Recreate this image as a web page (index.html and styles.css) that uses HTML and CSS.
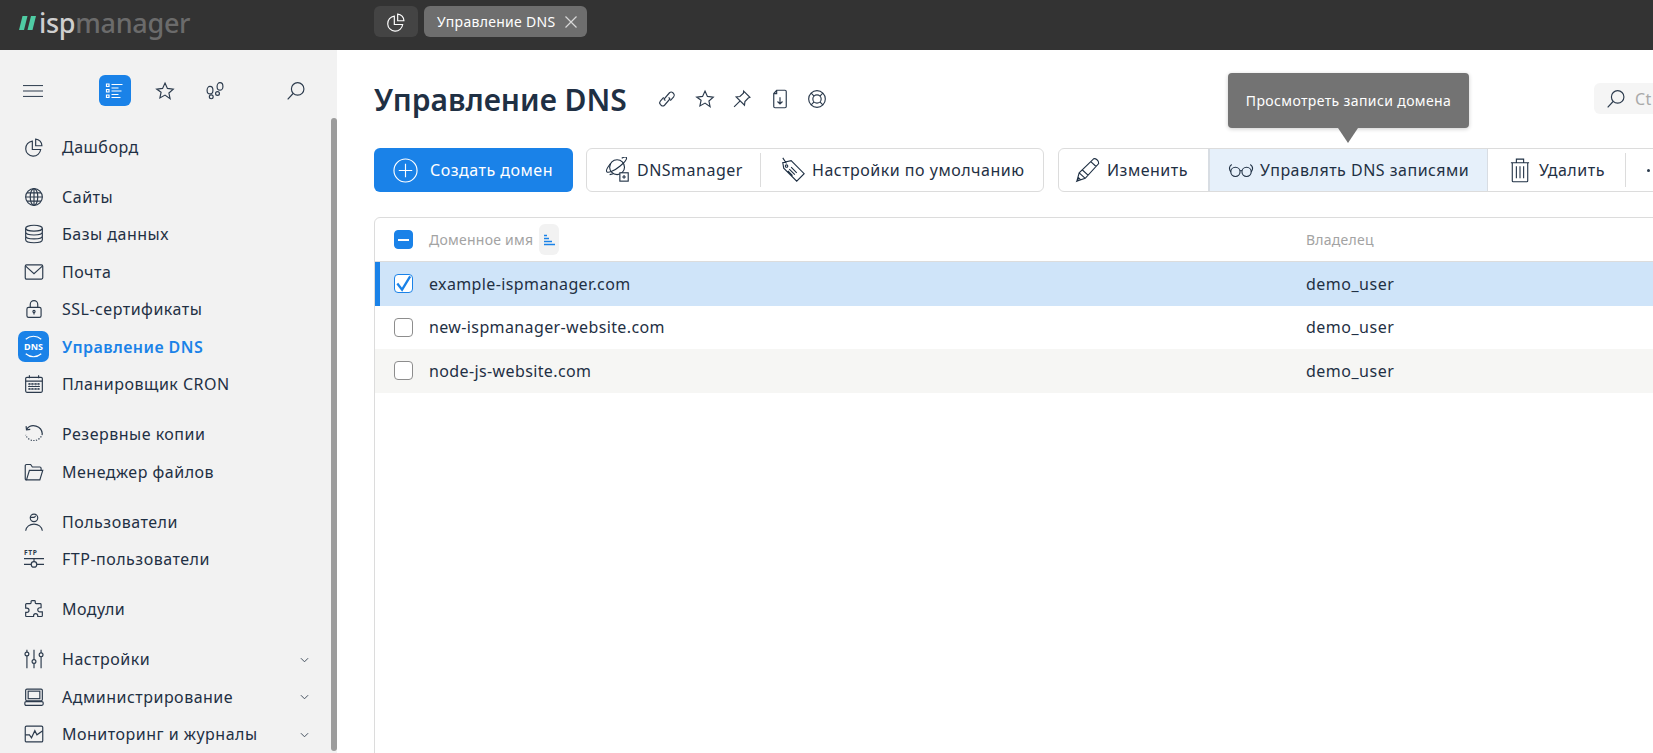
FILE: index.html
```html
<!DOCTYPE html>
<html lang="ru">
<head>
    <meta charset="UTF-8">
    <title>Управление DNS</title>
    <link rel="stylesheet" href="styles.css">
</head>
<body>
    <header class="topbar">
        <div class="logo">
            <svg class="logo-mark" viewBox="0 0 17 14"><path d="M3.500 0H8.500L5 14H0zM12 0H17L13.500 14H8.500z"/></svg>
            <span class="logo-isp">isp</span><span class="logo-manager">manager</span>
        </div>
        <div class="home-tab">
            <svg class="ico" viewBox="0 0 24 24"><path d="M10 5a9 9 0 1 0 10 10H10z"/><path d="M14 2.500a8 8 0 0 1 7.500 8H14z"/></svg>
        </div>
        <div class="tab">Управление DNS
            <svg class="tab-close" viewBox="0 0 14 14"><path d="M1.500 1.500l11 11M12.500 1.500l-11 11"/></svg>
        </div>
    </header>

    <div class="layout">
        <aside class="sidebar">
            <div class="side-tools">
                <svg class="ico burger" viewBox="0 0 24 24"><path d="M0 5.500h24M0 12h24M0 18.500h24"/></svg>
                <span class="tool-active">
                    <svg viewBox="0 0 20 20"><path d="M1.500 3h2.500v2.500H1.500zM1.500 8.500h2.500v2.500H1.500zM1.500 14h2.500v2.500H1.500zM6.500 3.500h11M6.500 7h7M6.500 10h10M6.500 13.500h7M6.500 16.500h9"/></svg>
                </span>
                <svg class="ico tool-star" viewBox="0 0 24 24"><path d="M12 2.500l2.900 6.400 7 .8-5.200 4.700 1.400 6.900L12 16.900l-6.100 3.400 1.400-6.900L2.100 9.700l7-.8z"/></svg>
                <svg class="ico tool-steps" viewBox="0 0 24 24"><ellipse cx="6" cy="11" rx="3.500" ry="4.500"/><circle cx="7.500" cy="19" r="2.300"/><ellipse cx="18" cy="6.500" rx="3.500" ry="4.500"/><circle cx="15" cy="15" r="2.300"/></svg>
                <svg class="ico tool-search" viewBox="0 0 24 24"><circle cx="14" cy="9.500" r="7.500"/><path d="M8.500 15L2 22"/></svg>
            </div>
            <div class="scroll-thumb"></div>

            <nav class="nav">
                <div class="nav-group">
                    <a class="nav-item"><svg class="ico" viewBox="0 0 24 24"><path d="M10 5a9 9 0 1 0 10 10H10z"/><path d="M14 2.500a8 8 0 0 1 7.500 8H14z"/></svg>Дашборд</a>
                </div>
                <div class="nav-group">
                    <a class="nav-item"><svg class="ico" viewBox="0 0 24 24"><circle cx="12" cy="12" r="10"/><ellipse cx="12" cy="12" rx="4.500" ry="10"/><path d="M12 2v20M2 12h20M3.500 7h17M3.500 17h17"/></svg>Сайты</a>
                    <a class="nav-item"><svg class="ico" viewBox="0 0 24 24"><ellipse cx="12" cy="5" rx="10" ry="3.500"/><path d="M2 5v14c0 2 4.500 3.500 10 3.500s10-1.500 10-3.500V5M2 9.700c0 2 4.500 3.500 10 3.500s10-1.500 10-3.500M2 14.400c0 2 4.500 3.500 10 3.500s10-1.500 10-3.500"/></svg>Базы данных</a>
                    <a class="nav-item"><svg class="ico" viewBox="0 0 24 24"><rect x="1.500" y="3.500" width="21" height="17" rx="1.500"/><path d="M2 5l10 9 10-9"/></svg>Почта</a>
                    <a class="nav-item"><svg class="ico" viewBox="0 0 24 24"><rect x="3.500" y="10" width="17" height="12" rx="2"/><path d="M7.500 10V6.500a4.500 4.500 0 0 1 9 0V10"/><circle cx="12" cy="15" r="1.300"/><path d="M12 16v2.500"/></svg>SSL-сертификаты</a>
                    <a class="nav-item nav-item-active">
                        <span class="dns-badge">
                            <svg viewBox="0 0 32 32"><path d="M8 8.500a12 12 0 0 1 16 0M8 23.500a12 12 0 0 0 16 0"/></svg>
                            <span class="dns-label">DNS</span>
                        </span>Управление DNS</a>
                    <a class="nav-item"><svg class="ico" viewBox="0 0 24 24"><rect x="2" y="4" width="20" height="18" rx="1.500"/><path d="M2 8.500h20M6.500 1.500V5M17.500 1.500V5M5 12h14M5 15h14M5 18h14" /><path d="M6.500 11v8M10 11v8M14 11v8M17.500 11v8" stroke-dasharray="1.500 1.500"/></svg>Планировщик CRON</a>
                </div>
                <div class="nav-group">
                    <a class="nav-item"><svg class="ico" viewBox="0 0 24 24"><path d="M3 6.500A10.500 10.500 0 0 1 22 12"/><path d="M22 12A10.500 10.500 0 0 1 2 13" stroke-dasharray="1.500 1.700"/><path d="M2.500 2.500L3 7l4.500-.5"/></svg>Резервные копии</a>
                    <a class="nav-item"><svg class="ico" viewBox="0 0 24 24"><path d="M3 21.500a1.500 1.500 0 0 1-1.500-1.500V4.500A1.500 1.500 0 0 1 3 3h5l2 3h9a1.500 1.500 0 0 1 1.500 1.500V10"/><path d="M3 21.500l3.500-11.500h16l-3.500 11.500z"/></svg>Менеджер файлов</a>
                </div>
                <div class="nav-group">
                    <a class="nav-item"><svg class="ico" viewBox="0 0 24 24"><circle cx="12" cy="7" r="4.500"/><path d="M7.500 6.500h5M12.500 6.500l1.500-2M2 22.500c.5-5 5-8 10-8s9.500 3 10 8"/></svg>Пользователи</a>
                    <a class="nav-item"><svg class="ico" viewBox="0 0 24 24"><text class="ftp-text" x="0" y="7.500">FTP</text><path d="M0 11.500h24M0 18.500h8.500M15.500 18.500H24"/><circle cx="12" cy="18.500" r="3.300"/><path d="M12 11.500v3.700"/></svg>FTP-пользователи</a>
                </div>
                <div class="nav-group">
                    <a class="nav-item"><svg class="ico" viewBox="0 0 24 24"><path d="M8.500 4.500V3a1 1 0 0 1 1-1h3a1 1 0 0 1 1 1v1.500a1 1 0 0 0 1 1h5a1 1 0 0 1 1 1v4h-1.500a2 2 0 0 0 0 5H22v4.500a1 1 0 0 1-1 1h-4.500v-1a2.500 2.500 0 0 0-5 0v1H3a1 1 0 0 1-1-1v-4h1.500a2.500 2.500 0 0 0 0-5H2v-4.500a1 1 0 0 1 1-1h4.500a1 1 0 0 0 1-1z"/></svg>Модули</a>
                </div>
                <div class="nav-group">
                    <a class="nav-item"><svg class="ico" viewBox="0 0 24 24"><circle cx="3.500" cy="6" r="2.300"/><circle cx="12" cy="15" r="2.300"/><circle cx="20.500" cy="7" r="2.300"/><path d="M3.500 1v2.700M3.500 8.300V23M12 1v11.700M12 17.300V23M20.500 1v3.700M20.500 9.300V23"/></svg>Настройки<svg class="chevron" viewBox="0 0 10 6"><path d="M1 1l4 4 4-4"/></svg></a>
                    <a class="nav-item"><svg class="ico" viewBox="0 0 24 24"><rect x="2" y="2.500" width="20" height="14" rx="1.500"/><rect x="5" y="5" width="14" height="9"/><rect x="1" y="17.500" width="22" height="4.500" rx="1.500"/></svg>Администрирование<svg class="chevron" viewBox="0 0 10 6"><path d="M1 1l4 4 4-4"/></svg></a>
                    <a class="nav-item"><svg class="ico" viewBox="0 0 24 24"><rect x="1.500" y="2.500" width="21" height="19" rx="1.500"/><path d="M1.500 13h5l2.500 3.500 4-8.500 2.500 5 7-5"/></svg>Мониторинг и журналы<svg class="chevron" viewBox="0 0 10 6"><path d="M1 1l4 4 4-4"/></svg></a>
                </div>
            </nav>
        </aside>

        <main class="main">
            <div class="title-row">
                <h1>Управление DNS</h1>
                <div class="title-icons">
                    <svg class="ico" viewBox="0 0 24 24"><path d="M10 14l-1.500-2L15 4.500a3 3 0 0 1 4 0l1 1a3 3 0 0 1 0 4L16 14M14 10l1.500 2L9 19.500a3 3 0 0 1-4 0l-1-1a3 3 0 0 1 0-4L8 10"/></svg>
                    <svg class="ico" viewBox="0 0 24 24"><path d="M12 2.500l2.900 6.400 7 .8-5.200 4.700 1.400 6.900L12 16.900l-6.100 3.400 1.400-6.900L2.100 9.700l7-.8z"/></svg>
                    <svg class="ico" viewBox="0 0 24 24"><path d="M14 2.500l7.500 7.500-2 .8-4 4.200-.5 4.500L5 9.500l4.500-.5 4.200-4zM9.500 14.500L2.500 21.500"/></svg>
                    <svg class="ico" viewBox="0 0 24 24"><path d="M8 1.500h10a1.500 1.500 0 0 1 1.500 1.500v18a1.500 1.500 0 0 1-1.500 1.500H6A1.500 1.500 0 0 1 4.500 21V5.500zM8 1.500v4H4.500M12 10v7.500M9 15l3 3 3-3"/></svg>
                    <svg class="ico" viewBox="0 0 24 24"><circle cx="12" cy="12" r="10"/><circle cx="12" cy="12" r="5"/><path d="M5 5l3.500 3.500M19 5l-3.500 3.500M5 19l3.500-3.500M19 19l-3.500-3.500"/></svg>
                </div>
                <div class="title-search">
                    <svg class="ico" viewBox="0 0 24 24"><circle cx="14" cy="9.500" r="7.500"/><path d="M8.500 15L2 22"/></svg>
                    <span>Ct</span>
                </div>
            </div>

            <div class="toolbar">
                <button class="btn-create">
                    <svg viewBox="0 0 26 26"><circle cx="13" cy="13" r="12"/><path d="M13 6v14M6 13h14"/></svg>
                    Создать домен
                </button>
                <div class="btn-group group-a">
                    <button class="btn btn-dns">
                        <svg class="ico-lg" viewBox="0 0 28 28"><circle cx="13" cy="11" r="8"/><path d="M6 7C2 12 1 15 2 16c1.500 1.500 8-1 14-6s8-8 7-9.500c-.6-.8-2.500-.5-5 .8M9 18l-4 1"/><rect x="16" y="17" width="9" height="9" fill="#fff"/><path d="M20.500 19.500v4M18.500 21.500h4"/></svg>
                        DNSmanager
                    </button>
                    <button class="btn btn-defaults">
                        <svg class="ico-lg" viewBox="0 0 28 28"><path d="M3 6l9-2 14 14-8 8L4 12zM7 8.500a1.300 1.300 0 1 0 .1 0M7 7L3 1M10 13l6 6M12 11l6 6M8.500 15l5 5" /></svg>
                        Настройки по умолчанию
                    </button>
                </div>
                <div class="btn-group group-b">
                    <button class="btn btn-edit">
                        <svg class="ico-lg" viewBox="0 0 28 28"><path d="M2 26l2.500-9L20 2c2-1 6 2 5.500 5L11 23zM4.500 17l6.500 6M8 14l6 5.500M17 5l6 5.500M2 26l4-1.500-2-2z"/></svg>
                        Изменить
                    </button>
                    <button class="btn btn-records">
                        <svg class="ico-lg" viewBox="0 0 28 28"><circle cx="8" cy="16" r="5"/><circle cx="20" cy="16" r="5"/><path d="M13 15c.8-.7 1.400-.7 2 0M3 16C1 13 1 10 4 8M25 16c2-3 2-6-1-8"/></svg>
                        Управлять DNS записями
                    </button>
                    <button class="btn btn-delete">
                        <svg class="ico-trash" viewBox="0 0 22 28"><path d="M1 6h20M7 6V2h8v4M2.500 6v20a1 1 0 0 0 1 1h15a1 1 0 0 0 1-1V6M7 10v13M11 10v13M15 10v13"/></svg>
                        Удалить
                    </button>
                    <div class="btn-more"><i></i><i></i><i></i></div>
                </div>
            </div>

            <div class="tooltip">Просмотреть записи домена</div>

            <div class="list">
                <div class="row row-head">
                    <span class="check check-minus"></span>
                    <span class="col-name head-name">Доменное имя
                        <span class="sort-btn"><svg viewBox="0 0 12 12"><path d="M1 1.500h3M1 4.500h5M1 7.500h8M1 10.500h11"/></svg></span>
                    </span>
                    <span class="col-owner">Владелец</span>
                </div>
                <div class="row row-selected">
                    <span class="check check-on"><svg viewBox="0 0 20 20"><path d="M3.500 10l5 6.500L17 2.500"/></svg></span>
                    <span class="col-name">example-ispmanager.com</span>
                    <span class="col-owner">demo_user</span>
                </div>
                <div class="row">
                    <span class="check"></span>
                    <span class="col-name">new-ispmanager-website.com</span>
                    <span class="col-owner">demo_user</span>
                </div>
                <div class="row row-alt">
                    <span class="check"></span>
                    <span class="col-name">node-js-website.com</span>
                    <span class="col-owner">demo_user</span>
                </div>
            </div>
        </main>
    </div>
</body>
</html>
```

FILE: styles.css
```css
* {
    box-sizing: border-box;
}
html, body {
    height: 100%;
}
body {
    margin: 0;
    overflow: hidden;
    font-family: "Noto Sans", sans-serif;
    font-size: 16px;
    letter-spacing: 0.500px;
    color: #1f3044;
    background: #fff;
}
.ico {
    width: 20px;
    height: 20px;
    fill: none;
    stroke: #2c3b4d;
    stroke-width: 1.400;
    flex: none;
}

/* top bar */
.topbar {
    height: 50px;
    background: #333;
    display: flex;
    align-items: flex-start;
    padding: 6px 0 0 19px;
}
.logo {
    width: 355px;
    height: 32px;
    display: flex;
    align-items: center;
    font-size: 27px;
    font-weight: 500;
    letter-spacing: -0.300px;
    line-height: 32px;
    padding-top: 2px;
}
.logo-mark {
    width: 17px;
    height: 14px;
    fill: #4fcca3;
    margin-right: 3px;
}
.logo-isp {
    color: #cfcfcf;
}
.logo-manager {
    color: #6b6b6b;
}
.home-tab {
    width: 44px;
    height: 31px;
    background: #444;
    border-radius: 6px;
    display: flex;
    align-items: center;
    justify-content: center;
    margin-right: 6px;
}
.home-tab .ico {
    stroke: #fff;
}
.tab {
    width: 163px;
    height: 31px;
    background: #6e6e6e;
    border-radius: 6px;
    color: #fff;
    font-size: 14px;
    letter-spacing: 0.300px;
    display: flex;
    align-items: center;
    justify-content: space-between;
    padding: 0 9px 0 13px;
}
.tab-close {
    width: 14px;
    height: 14px;
    fill: none;
    stroke: #d8d8d8;
    stroke-width: 1.200;
}

.layout {
    display: flex;
    height: calc(100% - 50px);
}

/* sidebar */
.sidebar {
    width: 337px;
    flex: none;
    background: #f2f2f2;
    position: relative;
    overflow: hidden;
}
.side-tools {
    display: flex;
    align-items: center;
    height: 31px;
    margin-top: 25px;
    padding-left: 23px;
}
.burger {
    stroke-width: 1.200;
}
.tool-active {
    width: 32px;
    height: 31px;
    background: #1a82e8;
    border-radius: 6px;
    margin-left: 56px;
    display: flex;
    align-items: center;
    justify-content: center;
}
.tool-active svg {
    width: 20px;
    height: 20px;
    fill: none;
    stroke: #fff;
    stroke-width: 1.200;
}
.tool-star {
    margin-left: 24px;
}
.tool-steps {
    margin-left: 30px;
}
.tool-search {
    margin-left: 61px;
}
.scroll-thumb {
    position: absolute;
    right: 0;
    top: 68px;
    bottom: 2px;
    width: 6px;
    border-radius: 3px;
    background: #9c9c9c;
}
.nav {
    padding: 22px 0 0 24px;
}
.nav-group {
    margin-bottom: 12.500px;
}
.nav-item {
    height: 37.500px;
    display: flex;
    align-items: center;
    gap: 18px;
    position: relative;
    white-space: nowrap;
}
.nav-item-active {
    color: #1a82e8;
    font-weight: 600;
    letter-spacing: 0.450px;
}
.dns-badge {
    width: 31px;
    height: 31px;
    margin: 0 -5px 0 -6px;
    background: #1a82e8;
    border-radius: 7px;
    position: relative;
    display: flex;
    align-items: center;
    justify-content: center;
    flex: none;
}
.dns-badge svg {
    position: absolute;
    inset: 0;
    fill: none;
    stroke: #fff;
    stroke-width: 1.200;
}
.dns-label {
    color: #fff;
    font-size: 9px;
    font-weight: 700;
    letter-spacing: 0;
}
.ftp-text {
    font-size: 8px;
    font-weight: 700;
    letter-spacing: 0.800px;
    fill: #2c3b4d;
    stroke: none;
}
.chevron {
    position: absolute;
    left: 276px;
    top: 16px;
    width: 9px;
    height: 6px;
    fill: none;
    stroke: #44505e;
    stroke-width: 1.100;
}

/* main */
.main {
    flex: 1;
    min-width: 0;
    padding: 0 0 0 37px;
    position: relative;
    overflow: hidden;
}
.title-row {
    height: 98px;
    display: flex;
    align-items: center;
}
h1 {
    margin: 0;
    font-size: 30px;
    font-weight: 600;
    letter-spacing: 0;
    width: 283px;
    white-space: nowrap;
}
.title-icons {
    display: flex;
    gap: 17.500px;
}
.title-search {
    position: absolute;
    left: 1257px;
    top: 33px;
    width: 80px;
    height: 31px;
    border-radius: 6px;
    background: #f5f5f5;
    display: flex;
    align-items: center;
    gap: 9px;
    padding-left: 12px;
    color: #a9a9a9;
}
.toolbar {
    display: flex;
    height: 44px;
    width: 1400px;
}
.btn-create {
    width: 199px;
    height: 44px;
    background: #1a82e8;
    color: #fff;
    border: 0;
    border-radius: 6px;
    font: inherit;
    letter-spacing: inherit;
    display: flex;
    align-items: center;
    gap: 12px;
    padding: 0 0 0 19px;
    margin-right: 13px;
}
.btn-create svg {
    width: 25px;
    height: 25px;
    fill: none;
    stroke: #fff;
    stroke-width: 1.200;
}
.btn-group {
    display: flex;
    height: 44px;
    border: 1px solid #dcdcdc;
    border-radius: 6px;
    flex: none;
}
.group-a {
    width: 458px;
    margin-right: 14px;
}
.group-b {
    width: 640px;
}
.btn {
    height: 42px;
    border: 0;
    background: none;
    font: inherit;
    letter-spacing: inherit;
    color: inherit;
    display: flex;
    align-items: center;
    gap: 6px;
    padding: 0;
    position: relative;
    white-space: nowrap;
}
.ico-lg {
    width: 26px;
    height: 26px;
    fill: none;
    stroke: #1f3044;
    stroke-width: 1.200;
    flex: none;
}
.ico-trash {
    width: 20px;
    height: 26px;
    fill: none;
    stroke: #1f3044;
    stroke-width: 1.200;
    flex: none;
}
.btn-dns {
    width: 174px;
    padding-left: 18px;
}
.btn-dns::after, .btn-delete::after {
    content: "";
    position: absolute;
    right: 0;
    top: 4px;
    bottom: 4px;
    width: 1px;
    background: #dcdcdc;
}
.btn-defaults {
    padding-left: 19px;
}
.btn-edit {
    width: 151px;
    padding-left: 16px;
    border-right: 2px solid #d8dde3;
}
.btn-records {
    width: 278px;
    padding-left: 18px;
    background: #e6f0fa;
    border-right: 1px solid #d8dde3;
}
.btn-delete {
    width: 138px;
    padding-left: 22px;
    gap: 9px;
}
.btn-more {
    display: flex;
    align-items: center;
    gap: 5px;
    padding-left: 21px;
}
.btn-more i {
    width: 3px;
    height: 3px;
    border-radius: 50%;
    background: #2c3b4d;
}

/* tooltip over the records button */
.tooltip {
    position: absolute;
    left: 891px;
    top: 23px;
    width: 241px;
    height: 55px;
    background: #737373;
    border-radius: 4px;
    color: #fff;
    font-size: 14px;
    letter-spacing: 0.380px;
    display: flex;
    align-items: center;
    justify-content: center;
    box-shadow: 0 1px 4px rgba(0, 0, 0, 0.200);
}
.tooltip::after {
    content: "";
    position: absolute;
    left: 110px;
    top: 55px;
    border-style: solid;
    border-width: 15px 10px 0;
    border-color: #737373 transparent transparent;
}

/* domain list */
.list {
    width: 1400px;
    margin-top: 25px;
    height: 600px;
    border: 1px solid #dcdcdc;
    border-radius: 6px 0 0 0;
}
.row {
    height: 43.500px;
    display: flex;
    align-items: center;
    padding-left: 19px;
    white-space: nowrap;
}
.row-head {
    height: 44px;
    border-bottom: 1px solid #dcdcdc;
    color: #a3a3a3;
    font-size: 14px;
    letter-spacing: 0.250px;
}
.row-selected {
    background: #cfe4f9;
    border-left: 5px solid #1a82e8;
    padding-left: 14px;
}
.row-alt {
    background: #f6f6f4;
}
.check {
    width: 19px;
    height: 19px;
    border: 1px solid #8d8d8d;
    border-radius: 4px;
    background: #fff;
    flex: none;
    display: flex;
    align-items: center;
    justify-content: center;
}
.check-minus {
    background: #1a82e8;
    border-color: #1a82e8;
}
.check-minus::before {
    content: "";
    width: 11px;
    height: 2px;
    background: #fff;
}
.check-on {
    border-color: #1a82e8;
}
.check-on svg {
    width: 19px;
    height: 19px;
    flex: none;
    fill: none;
    stroke: #1a82e8;
    stroke-width: 2.400;
}
.col-name {
    width: 877px;
    margin-left: 16px;
    letter-spacing: 0.380px;
    flex: none;
}
.head-name {
    display: flex;
    align-items: center;
    gap: 6px;
    letter-spacing: inherit;
}
.sort-btn {
    width: 20px;
    height: 31px;
    background: #f2f2f2;
    border-radius: 6px;
    display: flex;
    align-items: center;
    justify-content: center;
}
.sort-btn svg {
    width: 12px;
    height: 12px;
    fill: none;
    stroke: #1a82e8;
    stroke-width: 1.400;
}
```
